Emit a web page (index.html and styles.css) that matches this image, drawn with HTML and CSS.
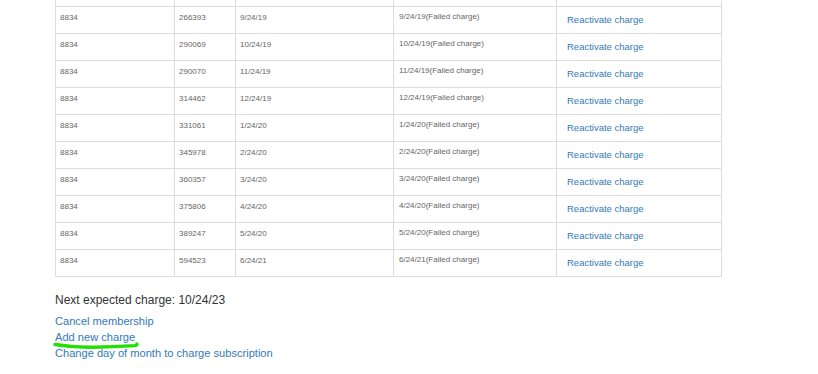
FILE: index.html
```html
<!DOCTYPE html>
<html>
<head>
<meta charset="utf-8">
<link rel="stylesheet" href="styles.css">
</head>
<body>
<div class="page">
  <table class="charges">
    <colgroup>
      <col class="c1"><col class="c2"><col class="c3"><col class="c4"><col class="c5">
    </colgroup>
    <tbody>
      <tr class="hidden-row"><td></td><td></td><td></td><td></td><td></td></tr>
      <tr><td>8834</td><td>266393</td><td>9/24/19</td><td class="fail">9/24/19(Failed charge)</td><td class="act"><a href="#">Reactivate charge</a></td></tr>
      <tr><td>8834</td><td>290069</td><td>10/24/19</td><td class="fail">10/24/19(Failed charge)</td><td class="act"><a href="#">Reactivate charge</a></td></tr>
      <tr><td>8834</td><td>290070</td><td>11/24/19</td><td class="fail">11/24/19(Failed charge)</td><td class="act"><a href="#">Reactivate charge</a></td></tr>
      <tr><td>8834</td><td>314462</td><td>12/24/19</td><td class="fail">12/24/19(Failed charge)</td><td class="act"><a href="#">Reactivate charge</a></td></tr>
      <tr><td>8834</td><td>331061</td><td>1/24/20</td><td class="fail">1/24/20(Failed charge)</td><td class="act"><a href="#">Reactivate charge</a></td></tr>
      <tr><td>8834</td><td>345978</td><td>2/24/20</td><td class="fail">2/24/20(Failed charge)</td><td class="act"><a href="#">Reactivate charge</a></td></tr>
      <tr><td>8834</td><td>360357</td><td>3/24/20</td><td class="fail">3/24/20(Failed charge)</td><td class="act"><a href="#">Reactivate charge</a></td></tr>
      <tr><td>8834</td><td>375806</td><td>4/24/20</td><td class="fail">4/24/20(Failed charge)</td><td class="act"><a href="#">Reactivate charge</a></td></tr>
      <tr><td>8834</td><td>389247</td><td>5/24/20</td><td class="fail">5/24/20(Failed charge)</td><td class="act"><a href="#">Reactivate charge</a></td></tr>
      <tr><td>8834</td><td>594523</td><td>6/24/21</td><td class="fail">6/24/21(Failed charge)</td><td class="act"><a href="#">Reactivate charge</a></td></tr>
    </tbody>
  </table>

  <p class="next">Next expected charge: 10/24/23</p>
  <div class="links">
    <a href="#">Cancel membership</a>
    <span class="marked">
      <a href="#">Add new charge</a>
      <svg class="scribble" width="86" height="9" viewBox="0 0 86 9"><path d="M2 3.5 C 14 5.5, 26 6.5, 40 6.2 C 56 5.8, 70 5.2, 82 4.6 C 83 4.4, 84 3.8, 84 3" fill="none" stroke="#22e000" stroke-width="3.4" stroke-linecap="round"/></svg>
    </span>
    <a href="#">Change day of month to charge subscription</a>
  </div>
</div>
</body>
</html>
```

FILE: styles.css
```css
html, body {
  margin: 0;
  padding: 0;
  background: #ffffff;
}

body {
  font-family: "Liberation Sans", Arial, sans-serif;
  color: #333333;
  overflow: hidden;
}

.page {
  padding-left: 55px;
  width: 667px;
}

.charges {
  border-collapse: collapse;
  table-layout: fixed;
  width: 666px;
  margin-top: -21px;
}

.c1 { width: 119px; }
.c2 { width: 61px; }
.c3 { width: 158px; }
.c4 { width: 163px; }
.c5 { width: 165px; }

.charges td {
  border: 1px solid #dddddd;
  height: 27px;
  box-sizing: border-box;
  padding: 5px 4px 0 4px;
  vertical-align: top;
  font-size: 8px;
  line-height: 11px;
  color: #666666;
  white-space: nowrap;
}

.charges td.fail {
  padding-top: 4px;
  padding-left: 5px;
}

.charges td.act {
  padding-top: 6px;
}

.charges td.act a {
  display: inline-block;
  margin-left: 6px;
  font-size: 9.5px;
  line-height: 13px;
  color: #337ab7;
  text-decoration: none;
}

.next {
  margin: 15px 0 5px 0;
  font-size: 12px;
  line-height: 16px;
  color: #333333;
}

.links {
  display: flex;
  flex-direction: column;
  align-items: flex-start;
}

.links a {
  font-size: 11.1px;
  line-height: 16px;
  color: #337ab7;
  text-decoration: none;
}

.marked {
  position: relative;
  display: block;
}

.marked a {
  display: block;
}

.scribble {
  position: absolute;
  left: -2px;
  top: 12px;
}
```
